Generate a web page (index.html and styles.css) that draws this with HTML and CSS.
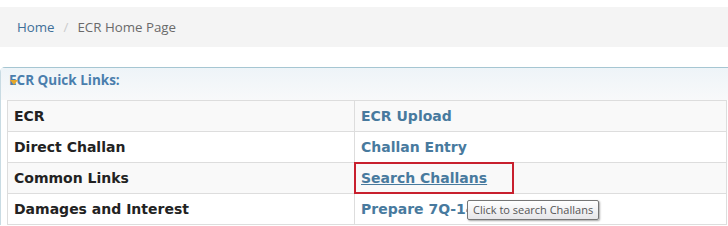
FILE: index.html
```html
<!DOCTYPE html>
<html>
<head>
<meta charset="utf-8">
<link rel="stylesheet" href="styles.css">
</head>
<body>
<div class="breadcrumb">
  <a class="crumb-link" href="#">Home</a><span class="sep">/</span><span class="crumb-current">ECR Home Page</span>
</div>
<div class="panel">
  <div class="panel-heading"><span class="caret"></span>ECR Quick Links:</div>
  <table class="links">
    <tr class="odd"><td class="label">ECR</td><td><a href="#">ECR Upload</a></td></tr>
    <tr><td class="label">Direct Challan</td><td><a href="#">Challan Entry</a></td></tr>
    <tr class="odd"><td class="label">Common Links</td><td class="hl"><a class="u" href="#">Search Challans</a><span class="redbox"></span></td></tr>
    <tr><td class="label">Damages and Interest</td><td class="tipcell"><a href="#">Prepare 7Q-14B</a><span class="tooltip">Click to search Challans</span></td></tr>
  </table>
</div>
</body>
</html>
```
FILE: styles.css
```css
html, body { margin: 0; padding: 0; background: #fff; overflow: hidden; }
body { font-family: "Open Sans", "DejaVu Sans", sans-serif; width: 728px; height: 226px; position: relative; }
.breadcrumb { margin-top: 7px; height: 40px; background: #f4f4f4; padding-left: 17px; font-size: 13.3px; line-height: 40px; color: #777; }
.crumb-link { color: #3f6f98; text-decoration: none; }
.sep { color: #ccc; padding: 0 9px 0 9px; }
.crumb-current { color: #6a6a6a; }
.panel { margin-top: 20px; border-top: 1px solid #a6c6d2; border-left: 1px solid #c8dbe3; border-top-left-radius: 5px; position: relative; }
.panel-heading { height: 32px; line-height: 25px; padding-left: 8px; font-size: 13.5px; font-weight: 700; color: #4a7ead; background: linear-gradient(#eef4f8, #f8f9fa); position: relative; }
.caret { position: absolute; left: 9px; top: 12px; width: 0; height: 0; border-left: 4px solid transparent; border-right: 4px solid transparent; border-top: 5px solid #e5a82a; }
.links { margin-left: 6px; width: 720px; border-collapse: collapse; font-family: "DejaVu Sans", Verdana, sans-serif; font-size: 14px; font-weight: 700; }
.links td { border: 1px solid #dddddd; height: 30px; padding: 0 0 0 6px; color: #222; vertical-align: middle; }
.links td.label { width: 340px; }
.links tr.odd td { background: #f9f9f9; }
.links a { color: #487a9e; text-decoration: none; }
.links a.u { text-decoration: underline; }
.hl, .tipcell { position: relative; }
.redbox { position: absolute; left: -1px; top: -1px; width: 156px; height: 28px; border: 2px solid #c8202e; }
.tooltip { position: absolute; left: 112px; top: 6px; height: 18px; line-height: 17px; padding: 0 5px; font-family: "Open Sans", sans-serif; font-weight: 400; font-size: 11px; color: #555; background: linear-gradient(#ffffff, #e6e6e9); border: 1px solid #767676; border-radius: 2px; box-shadow: 1px 1px 2px rgba(0,0,0,0.35); white-space: nowrap; z-index: 2; }
```
